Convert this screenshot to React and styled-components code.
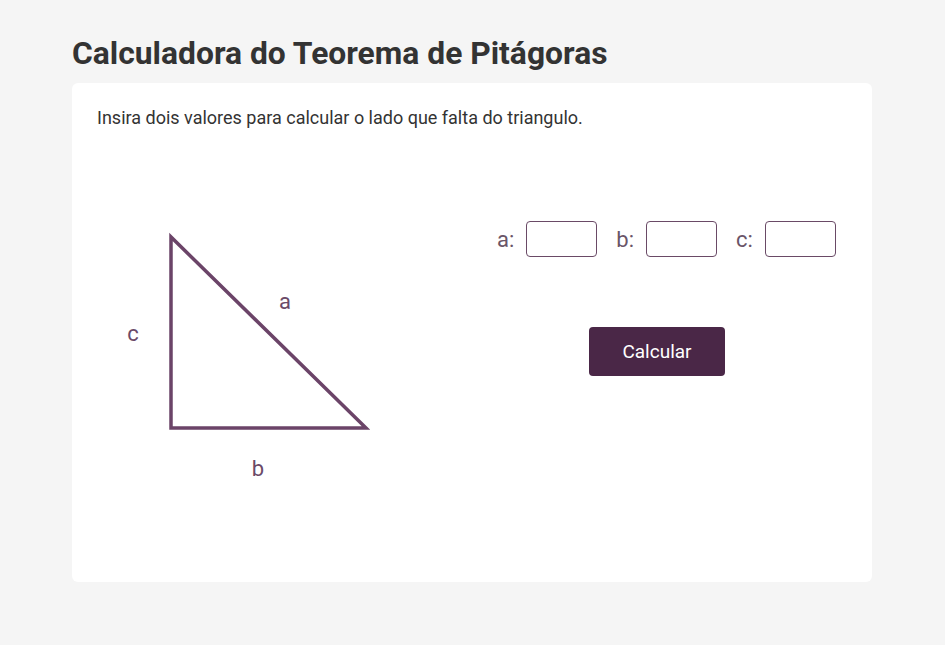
import React from 'react'
import styled, { createGlobalStyle } from 'styled-components'

const GlobalStyle = createGlobalStyle`
  html, body {
    margin: 0;
    background: #f5f5f5;
    font-family: Roboto, "Liberation Sans", sans-serif;
  }
  * { box-sizing: border-box; }
`

const Page = styled.div`
  padding: 35px 73px 40px 72px;
`

const Title = styled.h1`
  margin: 0 0 11px;
  font-size: 31.8px;
  line-height: 37px;
  font-weight: 700;
  color: #333;
`

const Card = styled.div`
  background: #fff;
  border-radius: 6px;
  height: 499px;
  padding: 22px 25px;
`

const Intro = styled.p`
  margin: 0;
  font-size: 18px;
  line-height: 26px;
  color: #333;
`

const Body = styled.div`
  display: flex;
  align-items: flex-start;
  margin-top: 69px;
`

const Diagram = styled.svg`
  margin-left: 13px;
  flex: none;
`

const Form = styled.div`
  display: flex;
  flex-direction: column;
  align-items: flex-start;
  margin-left: 107px;
  margin-top: 21px;
`

const Inputs = styled.div`
  display: flex;
  align-items: center;
  gap: 19px;
`

const Field = styled.label`
  display: flex;
  align-items: center;
  gap: 12px;
  font-size: 22px;
  color: #6a5568;
`

const Box = styled.input`
  width: 71px;
  height: 36px;
  border: 1px solid #6a4a66;
  border-radius: 4px;
  background: #fff;
  outline: none;
`

const Button = styled.button`
  margin-top: 70px;
  margin-left: 92px;
  width: 136px;
  height: 49px;
  border: none;
  border-radius: 4px;
  background: #4a2747;
  color: #fff;
  font-family: inherit;
  font-size: 19px;
  cursor: pointer;
`

const SIDE = '#6b4468'

function Triangle() {
  return (
    <Diagram width="280" height="290" viewBox="0 0 280 290">
      <polygon
        points="61,37 61,228 256,228"
        fill="none"
        stroke={SIDE}
        strokeWidth="3.5"
        strokeLinejoin="miter"
      />
      <g fill="#6b4a68" fontSize="22" fontFamily="Roboto, sans-serif" textAnchor="middle" dominantBaseline="central">
        <text x="23" y="133">c</text>
        <text x="175" y="101">a</text>
        <text x="148" y="268">b</text>
      </g>
    </Diagram>
  )
}

export default function App() {
  return (
    <Page>
      <GlobalStyle />
      <Title>Calculadora do Teorema de Pitágoras</Title>
      <Card>
        <Intro>Insira dois valores para calcular o lado que falta do triangulo.</Intro>
        <Body>
          <Triangle />
          <Form>
            <Inputs>
              {['a', 'b', 'c'].map((s) => (
                <Field key={s}>
                  {s}:
                  <Box type="text" />
                </Field>
              ))}
            </Inputs>
            <Button>Calcular</Button>
          </Form>
        </Body>
      </Card>
    </Page>
  )
}
